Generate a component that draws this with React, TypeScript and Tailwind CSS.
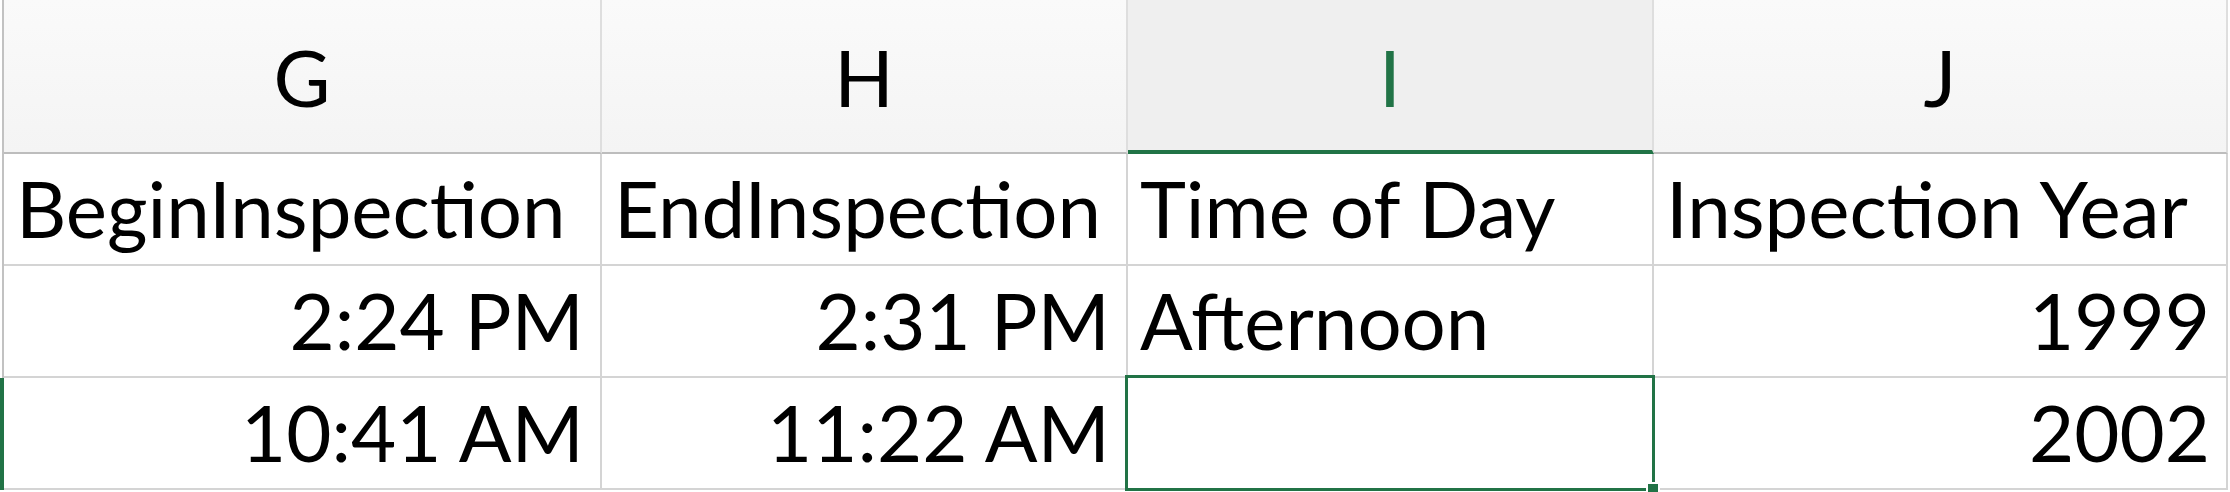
const columns = [
  { letter: 'G', width: 'w-[598px]', selected: false },
  { letter: 'H', width: 'w-[526px]', selected: false },
  { letter: 'I', width: 'w-[526px]', selected: true },
  { letter: 'J', width: 'w-[574px]', selected: false },
];

const rows = [
  { cells: ['BeginInspection', 'EndInspection', 'Time of Day', 'Inspection Year'], align: ['left', 'left', 'left', 'left'] },
  { cells: ['2:24 PM', '2:31 PM', 'Afternoon', '1999'], align: ['right', 'right', 'left', 'right'] },
  { cells: ['10:41 AM', '11:22 AM', '', '2002'], align: ['right', 'right', 'left', 'right'] },
];

export default function App() {
  return (
    <div className="relative w-[2230px] h-[492px] bg-white overflow-hidden font-['Lato',sans-serif] text-[78px] text-black">
      <div className="flex">
        <div className="w-[2px] h-[154px]"></div>
        <div className="w-[2px] h-[154px] bg-[#c2c2c2]"></div>
        {columns.map((col) => (
          <div
            key={col.letter}
            className={`${col.width} flex items-end justify-center border-r-2 ${
              col.selected
                ? 'h-[154px] bg-[#efefef] border-b-4 border-r-[#dedede] border-b-[#217346] text-[#217346] pb-[34px]'
                : 'h-[154px] bg-gradient-to-b from-[#fafafa] to-[#f4f4f4] border-b-2 border-r-[#dedede] border-b-[#bdbdbd] pb-[36px]'
            }`}
          >
            <span className="leading-none">{col.letter}</span>
          </div>
        ))}
      </div>

      {rows.map((row, r) => (
        <div key={r} className="flex">
          {r === 2 ? (
            <div className="w-[4px] h-[112px] bg-[#217346]"></div>
          ) : (
            <>
              <div className="w-[2px] h-[112px]"></div>
              <div className="w-[2px] h-[112px] bg-[#c2c2c2]"></div>
            </>
          )}
          {row.cells.map((text, c) => (
            <div
              key={c}
              className={`${columns[c].width} h-[112px] flex items-end border-r-2 border-b-2 border-[#d4d4d4] pb-[17px] ${
                row.align[c] === 'right' ? 'justify-end pr-[16px]' : 'justify-start pl-[12px]'
              }`}
            >
              <span className="leading-none whitespace-nowrap">{text}</span>
            </div>
          ))}
        </div>
      ))}

      {/* active cell I3 */}
      <div className="absolute left-[1125px] top-[375px] w-[530px] h-[116px] border-[3px] border-[#217346]"></div>
      <div className="absolute left-[1646px] top-[482px] p-[2px] bg-white">
        <div className="w-[10px] h-[10px] bg-[#217346]"></div>
      </div>
    </div>
  );
}
